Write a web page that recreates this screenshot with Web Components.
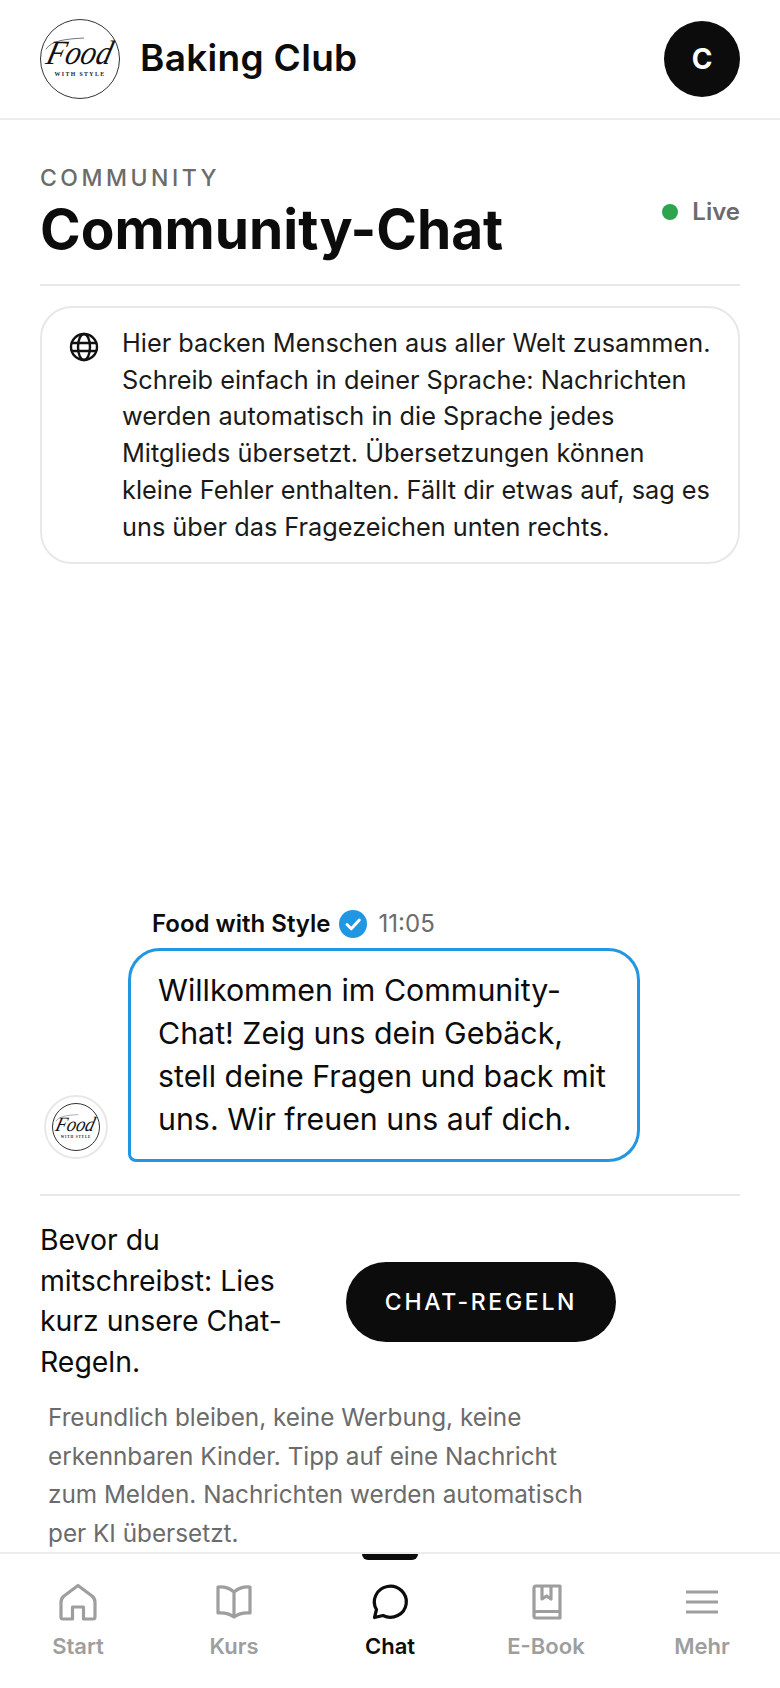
<!DOCTYPE html>
<html lang="de">
<head>
<meta charset="utf-8">
<title>Baking Club</title>
<style>
html,body{margin:0;height:100%;background:#fff;}
body{font-family:Inter,"Liberation Sans",sans-serif;color:#0c0c0c;}
</style>
</head>
<body>
<chat-app>
  <club-header slot="header"></club-header>
  <page-title slot="title"></page-title>
  <info-card slot="info">Hier backen Menschen aus aller Welt zusammen. Schreib einfach in deiner Sprache: Nachrichten werden automatisch in die Sprache jedes Mitglieds übersetzt. Übersetzungen können kleine Fehler enthalten. Fällt dir etwas auf, sag es uns über das Fragezeichen unten rechts.</info-card>
  <chat-message slot="chat" name="Food with Style" time="11:05">Willkommen im Community-Chat! Zeig uns dein Gebäck, stell deine Fragen und back mit uns. Wir freuen uns auf dich.</chat-message>
  <rules-box slot="rules"></rules-box>
  <bottom-nav slot="nav"></bottom-nav>
</chat-app>

<script>
class ChatApp extends HTMLElement {
  constructor() {
    super();
    this.attachShadow({mode:'open'}).innerHTML = `
<style>
:host{display:flex;flex-direction:column;height:1688px;overflow:hidden;}
main{flex:1;min-height:0;display:flex;flex-direction:column;padding:0 40px;}
.chat{flex:1;min-height:0;display:flex;flex-direction:column;justify-content:flex-end;}
</style>
<slot name="header"></slot>
<main>
  <slot name="title"></slot>
  <slot name="info"></slot>
  <div class="chat"><slot name="chat"></slot></div>
  <slot name="rules"></slot>
</main>
<slot name="nav"></slot>`;
  }
}

class BrandLogo extends HTMLElement {
  constructor() {
    super();
    this.attachShadow({mode:'open'}).innerHTML = `
<style>
:host{--u:calc(var(--logo-size,80) * 1px / 80);display:flex;flex-direction:column;align-items:center;box-sizing:border-box;position:relative;flex:none;width:calc(var(--u) * 80);height:calc(var(--u) * 80);padding-top:calc(var(--u) * 17);border:1px solid #333;border-radius:50%;background:#fff;color:#111;white-space:nowrap;}
.food{font:italic 400 calc(var(--u) * 34)/calc(var(--u) * 32) "Liberation Serif",serif;transform:skewX(-14deg) scaleX(.9);}
.style{margin-top:calc(var(--u) * 2);font:700 calc(var(--u) * 5.800)/calc(var(--u) * 7) "Liberation Serif",serif;letter-spacing:calc(var(--u) * 1.400);color:#222;}
svg{position:absolute;left:0;top:0;width:100%;height:100%;}
</style>
<svg viewBox="0 0 80 80"><path d="M5 30C11 21 25 19.500 44 18.500" fill="none" stroke="#111" stroke-width=".6"/></svg>
<span class="food">Food</span>
<span class="style">WITH STYLE</span>`;
  }
}

class ClubHeader extends HTMLElement {
  constructor() {
    super();
    this.attachShadow({mode:'open'}).innerHTML = `
<style>
:host{display:flex;align-items:center;height:118px;padding:0 40px;border-bottom:2px solid #ececec;flex:none;}
brand-logo{margin-right:20px;}
.name{font:600 37px/1 Inter,"Liberation Sans",sans-serif;letter-spacing:.3px;flex:1;margin-bottom:4px;}
.avatar{width:76px;height:76px;border-radius:50%;background:#0c0c0c;color:#fff;display:flex;align-items:center;justify-content:center;font:700 28px Inter,sans-serif;}
</style>
<brand-logo></brand-logo>
<div class="name">Baking Club</div>
<div class="avatar">C</div>`;
  }
}

class PageTitle extends HTMLElement {
  constructor() {
    super();
    this.attachShadow({mode:'open'}).innerHTML = `
<style>
:host{display:flex;justify-content:space-between;align-items:center;padding:44px 0 22px;border-bottom:2px solid #e8e8e8;}
.eyebrow{font:500 23px/28px Inter,sans-serif;letter-spacing:3.500px;color:#6b6b6b;}
h1{margin:4px 0 0;font:700 55px/66px Inter,sans-serif;color:#0c0c0c;}
.live{display:flex;align-items:center;gap:14px;padding-bottom:2px;font:600 24px/30px Inter,sans-serif;color:#6b6b6b;}
.dot{width:16px;height:16px;border-radius:50%;background:#2ea44f;}
</style>
<div>
  <div class="eyebrow">COMMUNITY</div>
  <h1>Community-Chat</h1>
</div>
<div class="live"><span class="dot"></span>Live</div>`;
  }
}

class InfoCard extends HTMLElement {
  constructor() {
    super();
    this.attachShadow({mode:'open'}).innerHTML = `
<style>
:host{display:flex;gap:22px;margin-top:20px;padding:17px 24px 17px 26px;border:2px solid #e8e8e8;border-radius:32px;font:400 25.300px/36.700px Inter,sans-serif;color:#1a1a1a;}
svg{flex:none;width:32px;height:32px;margin-top:6px;}
.text{flex:1;}
</style>
<svg viewBox="0 0 32 32" fill="none" stroke="#111" stroke-width="2.400">
  <circle cx="16" cy="16" r="13"/>
  <ellipse cx="16" cy="16" rx="6" ry="13"/>
  <path d="M3.500 12h25M3.500 20h25"/>
</svg>
<div class="text"><slot></slot></div>`;
  }
}

class ChatMessage extends HTMLElement {
  constructor() {
    super();
    this.attachShadow({mode:'open'}).innerHTML = `
<style>
:host{display:flex;align-items:flex-end;gap:20px;padding:0 0 32px 4px;}
brand-logo{--logo-size:48;}
.ring{flex:none;width:64px;height:64px;border-radius:50%;border:2px solid #e8e8e8;box-sizing:border-box;display:flex;align-items:center;justify-content:center;margin-bottom:3px;}
.meta{display:flex;align-items:center;gap:8px;padding-left:24px;margin-bottom:9px;font:600 24px/30px Inter,sans-serif;color:#0c0c0c;}
.meta svg{width:28px;height:28px;}
.time{font-weight:400;color:#6b6b6b;margin-left:4px;}
.bubble{box-sizing:border-box;width:512px;padding:18px 27px 18px;border:3px solid #2196e3;border-radius:32px 32px 32px 8px;font:400 30.350px/43px Inter,sans-serif;color:#0c0c0c;}
</style>
<div class="ring"><brand-logo></brand-logo></div>
<div>
  <div class="meta">
    <span class="name"></span>
    <svg viewBox="0 0 28 28"><circle cx="14" cy="14" r="14" fill="#2196e3"/><path d="M8 14.500l4.300 4.300L20.300 10" fill="none" stroke="#fff" stroke-width="3" stroke-linecap="round" stroke-linejoin="round"/></svg>
    <span class="time"></span>
  </div>
  <div class="bubble"><slot></slot></div>
</div>`;
  }
  connectedCallback() {
    this.shadowRoot.querySelector('.name').textContent = this.getAttribute('name');
    this.shadowRoot.querySelector('.time').textContent = this.getAttribute('time');
  }
}

class RulesBox extends HTMLElement {
  constructor() {
    super();
    this.attachShadow({mode:'open'}).innerHTML = `
<style>
:host{display:block;border-top:2px solid #e8e8e8;padding:24px 0 0;}
.top{display:flex;align-items:center;gap:46px;}
.ask{width:260px;font:400 28.400px/40.500px Inter,sans-serif;color:#0c0c0c;}
button{width:270px;height:80px;margin-top:2px;border:0;border-radius:40px;background:#0c0c0c;color:#fff;font:500 23px Inter,sans-serif;letter-spacing:2.700px;}
.note{margin:16px 0 0 8px;width:560px;font:400 24.300px/38.400px Inter,sans-serif;color:#6b6b6b;}
</style>
<div class="top">
  <div class="ask">Bevor du mitschreibst: Lies kurz unsere Chat-Regeln.</div>
  <button>CHAT-REGELN</button>
</div>
<p class="note">Freundlich bleiben, keine Werbung, keine erkennbaren Kinder. Tipp auf eine Nachricht zum Melden. Nachrichten werden automatisch per KI übersetzt.</p>`;
  }
}

const navIcons = {
  start: '<path d="M24 6.500L38 17Q41 19.500 41 23V38Q41 40 39 40H29.500V28H18.500V40H9Q7 40 7 38V23Q7 19.500 10 17Z"/>',
  kurs: '<path d="M24 13C20 9.500 14 7.500 8 8V34C14 33.500 20 35 24 38C28 35 34 33.500 40 34V8C34 7.500 28 9.500 24 13ZM24 13V38"/>',
  chat: '<path d="M10.500 30.500A16 15.500 0 1 1 17 36.500L8.500 38.500Z"/>',
  ebook: '<path d="M38 7H14Q12 7 12 9V37Q12 39 14 39H38ZM12 35Q12 32.500 15 32.500H38M20 7V20L24.500 17L29 20V7"/>',
  mehr: '<path d="M8 13H40M8 23H40M8 33H40"/>'
};

class NavItem extends HTMLElement {
  constructor() {
    super();
    this.attachShadow({mode:'open'}).innerHTML = `
<style>
:host{display:flex;flex:1;flex-direction:column;align-items:center;position:relative;padding-top:25px;color:#9e9e9e;font:600 22px/28px Inter,sans-serif;}
:host([active]){color:#0c0c0c;}
:host([active])::before{content:"";position:absolute;top:0;left:50%;width:56px;height:6px;margin-left:-28px;background:#0c0c0c;border-radius:0 0 6px 6px;}
svg{display:block;width:48px;height:48px;margin-bottom:5px;}
</style>
<svg viewBox="0 0 48 48" fill="none" stroke="currentColor" stroke-width="3.200" stroke-linejoin="round"></svg>
<slot></slot>`;
  }
  connectedCallback() {
    this.shadowRoot.querySelector('svg').innerHTML = navIcons[this.getAttribute('icon')];
  }
}

class BottomNav extends HTMLElement {
  constructor() {
    super();
    this.attachShadow({mode:'open'}).innerHTML = `
<style>
:host{display:flex;flex:none;height:134px;border-top:2px solid #ececec;background:#fff;}
</style>
<nav-item icon="start">Start</nav-item>
<nav-item icon="kurs">Kurs</nav-item>
<nav-item icon="chat" active>Chat</nav-item>
<nav-item icon="ebook">E-Book</nav-item>
<nav-item icon="mehr">Mehr</nav-item>`;
  }
}

customElements.define('brand-logo', BrandLogo);
customElements.define('club-header', ClubHeader);
customElements.define('page-title', PageTitle);
customElements.define('info-card', InfoCard);
customElements.define('chat-message', ChatMessage);
customElements.define('rules-box', RulesBox);
customElements.define('nav-item', NavItem);
customElements.define('bottom-nav', BottomNav);
customElements.define('chat-app', ChatApp);
</script>
</body>
</html>
